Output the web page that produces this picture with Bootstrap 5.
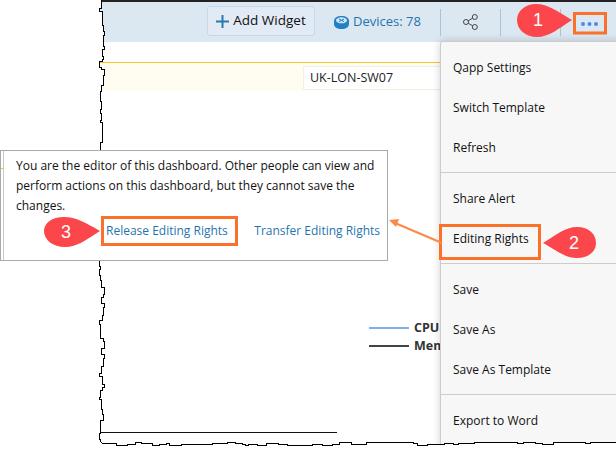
<!DOCTYPE html>
<html lang="en">
<head>
<meta charset="utf-8">
<title>Editing Rights</title>
<link rel="stylesheet" href="https://cdn.jsdelivr.net/npm/bootstrap@5.3.0/dist/css/bootstrap.min.css">
<style>
html,body{margin:0;background:#fff;overflow:hidden}
body{font-family:"Open Sans","Noto Sans",sans-serif;font-size:12px;color:#111}
.stage{position:relative;width:616px;height:450px;overflow:hidden;background:#fff}
.topbar{height:42px;margin-left:90px;background:#dbe7f1;border-top:2px solid #222;padding-left:117px}
.add-btn{height:30px;width:108px;background:#e1eaf5;border:1px solid #c8d8ea;border-radius:3px;font-size:13.5px;color:#111;padding:0;line-height:1;margin-top:-2px}
.add-btn:hover{background:#e1eaf5}
.devices{color:#1f75ae;font-size:13px;margin-left:19px;width:106px}
.sep{width:1px;height:27px;background:#a9c3da;flex:none}
.tool-cell{width:59px}
.under-icon{margin-left:20px;margin-top:6px}
.strip{margin-top:20px;margin-left:90px;height:29px;background:#fffdf2;border-top:1px solid #fcc22e;padding:3px 0 0 213px}
.dev-input{width:200px;height:24px;background:#fff;border:1px solid #f1efe6;padding:0 6px;font-size:12.5px;line-height:22px;color:#222}
.legend-box{margin:228px 0 0 369px;font-weight:700;font-size:12.5px;color:#333;line-height:18px}
.legend-line{width:40px;height:2px;margin-right:5px}
.axis-rule{height:1px;width:237px;margin:77px 0 0 100px;background:#111}
.tools-menu{left:440px;top:41px;width:220px;height:420px;margin:0;padding:6px 0 0;background:#f7f7f7;border:1px solid #ccc;border-radius:3px 0 0 0;box-shadow:0 0 8px rgba(0,0,0,.18);font-size:12px;z-index:3}
.tools-menu .dropdown-item{height:40px;line-height:40px;padding:0 0 0 12px;color:#111;font-size:12px}
.tools-menu .dropdown-divider{margin:4px 0 6px;border-color:#ccc;opacity:1}
.rights-pop{position:absolute;left:0;top:150px;width:388px;height:111px;background:#fff;border:1px solid #aaa;padding:5px 0 0 15px;line-height:20px;font-size:12px;color:#111;z-index:5}
.rights-pop::before{content:"";position:absolute;left:2px;top:0;bottom:0;width:1px;background:#c8c8c8}
.rights-pop::after{content:"";position:absolute;left:0;top:17px;width:2px;height:1px;background:#fcc22e}
.rights-links{padding:5px 7px 0 90px;color:#1f75ae}
.rights-links a{color:#1f75ae;text-decoration:none}
.tear{position:absolute;left:0;top:0;z-index:4}
.marks{position:absolute;left:0;top:0;z-index:6}
.num{font-family:"Liberation Sans",sans-serif;font-size:18px;fill:#fff}
.hl{fill:none;stroke:#f9712a;stroke-width:3}
</style>
</head>
<body>
<div class="stage">
  <div class="topbar d-flex align-items-center">
    <button type="button" class="btn add-btn d-flex align-items-center justify-content-center gap-1">
      <svg width="13" height="13" viewBox="0 0 13 13"><path d="M6.500 0v13M0 6.500h13" stroke="#2a7ab2" stroke-width="2"/></svg>Add Widget
    </button>
    <div class="devices d-flex align-items-center gap-1">
      <svg width="15" height="13" viewBox="0 0 15 13"><path d="M0 5c0-3 3-5 7.500-5S15 2 15 5v3c0 3-3 5-7.500 5S0 11 0 8z" fill="#2280c4"/><ellipse cx="7.500" cy="4.300" rx="5.500" ry="3" fill="#cfe6f5"/><path d="M5 3l5 2.600M10 3L5 5.600" stroke="#2280c4"/></svg>
      <span>Devices: 78</span>
    </div>
    <div class="sep"></div>
    <div class="tool-cell d-flex justify-content-center">
      <svg width="15" height="16" viewBox="0 0 15 16" fill="none" stroke="#444" stroke-width="1"><circle cx="11.800" cy="3" r="2.500"/><circle cx="3" cy="8" r="2.500"/><circle cx="11.800" cy="13" r="2.500"/><path d="M5.200 6.800l4.400-2.600M5.200 9.200l4.400 2.600"/></svg>
    </div>
    <div class="sep"></div>
    <div class="tool-cell"><svg class="under-icon" width="12" height="10" viewBox="0 0 12 10"><path d="M1 0v9h10" fill="none" stroke="#444" stroke-width="1.500"/></svg></div>
    <div class="sep"></div>
  </div>
  <div class="strip"><div class="dev-input">UK-LON-SW07</div></div>
  <div class="legend-box">
    <div class="d-flex align-items-center"><span class="legend-line" style="background:#7cb2e8"></span>CPU</div>
    <div class="d-flex align-items-center"><span class="legend-line" style="background:#444"></span>Memory</div>
  </div>
  <div class="axis-rule"></div>

  <div class="dropdown-menu show tools-menu">
    <a class="dropdown-item" href="#">Qapp Settings</a>
    <a class="dropdown-item" href="#">Switch Template</a>
    <a class="dropdown-item" href="#">Refresh</a>
    <hr class="dropdown-divider">
    <a class="dropdown-item" href="#">Share Alert</a>
    <a class="dropdown-item" href="#">Editing Rights</a>
    <hr class="dropdown-divider">
    <a class="dropdown-item" href="#">Save</a>
    <a class="dropdown-item" href="#">Save As</a>
    <a class="dropdown-item" href="#">Save As Template</a>
    <hr class="dropdown-divider">
    <a class="dropdown-item" href="#">Export to Word</a>
  </div>

  <svg class="tear" width="616" height="450" viewBox="0 0 616 450"><path id="tearPath" fill="#fff" stroke="#000" stroke-width="1" shape-rendering="crispEdges"/></svg>

  <div class="rights-pop">
    You are the editor of this dashboard. Other people can view and perform actions on this dashboard, but they cannot save the changes.
    <div class="rights-links d-flex justify-content-between">
      <a href="#">Release Editing Rights</a>
      <a href="#">Transfer Editing Rights</a>
    </div>
  </div>

  <svg class="marks" width="616" height="450" viewBox="0 0 616 450">
    <rect class="hl" x="574.500" y="13.500" width="31" height="19.500"/>
    <circle cx="583" cy="24" r="2" fill="#4d8be8"/><circle cx="589.500" cy="24" r="2" fill="#4d8be8"/><circle cx="596" cy="24" r="2" fill="#4d8be8"/>
    <path d="M572 20C557 11 548 4 536 4C525 4 517 11 517 20C517 30 526 37 537 37C549 37 558 29 572 20Z" fill="#fb474b"/>
    <text class="num" x="538" y="26" text-anchor="middle">1</text>
    <rect class="hl" x="440.500" y="225.500" width="99" height="33"/>
    <path d="M543 243C556 235 565 227 577 227C589 227 596 234 596 243C596 252 588 258 577 258C565 258 556 250 543 243Z" fill="#fb474b"/>
    <text class="num" x="574" y="249" text-anchor="middle">2</text>
    <rect class="hl" x="102.500" y="217.500" width="134" height="27"/>
    <path d="M100 231C86 223 76 217 64 217C52 217 44 223 44 231C44 240 53 247 65 247C77 247 86 240 100 231Z" fill="#fb474b"/>
    <text class="num" x="66" y="238" text-anchor="middle">3</text>
    <path d="M442 243L395 223" stroke="#fb8a48" stroke-width="2" fill="none"/>
    <path d="M389 220L399 219L396 227Z" fill="#fb8a48"/>
  </svg>
</div>
<script>
(function(){
  var s=4242;function r(){s=(s*1103515245+12345)&2147483647;return ((s>>8)&65535)/65535;}
  var d="M-5 -5L101.500 -5",x=101,y=0;
  while(y<441){
    y+=2+Math.floor(r()*7);if(y>441)y=441;
    d+="L"+(x+.5)+" "+(y+.5);
    x+=Math.floor(r()*7)-3;if(x<99)x=100;if(x>104)x=103;
    d+="L"+(x+.5)+" "+(y+.5);
  }
  var h=443;x=102;
  d+="L"+(x+.5)+" "+(h+.5);
  while(x<620){
    x+=3+Math.floor(r()*10);
    d+="L"+(x+.5)+" "+(h+.5);
    h+=Math.floor(r()*5)-2;if(h<442)h=442;if(h>445)h=444;
    d+="L"+(x+.5)+" "+(h+.5);
  }
  d+="L625 455L-5 455Z";
  document.getElementById("tearPath").setAttribute("d",d);
})();
</script>
<script src="https://cdn.jsdelivr.net/npm/bootstrap@5.3.0/dist/js/bootstrap.bundle.min.js"></script>
</body>
</html>
